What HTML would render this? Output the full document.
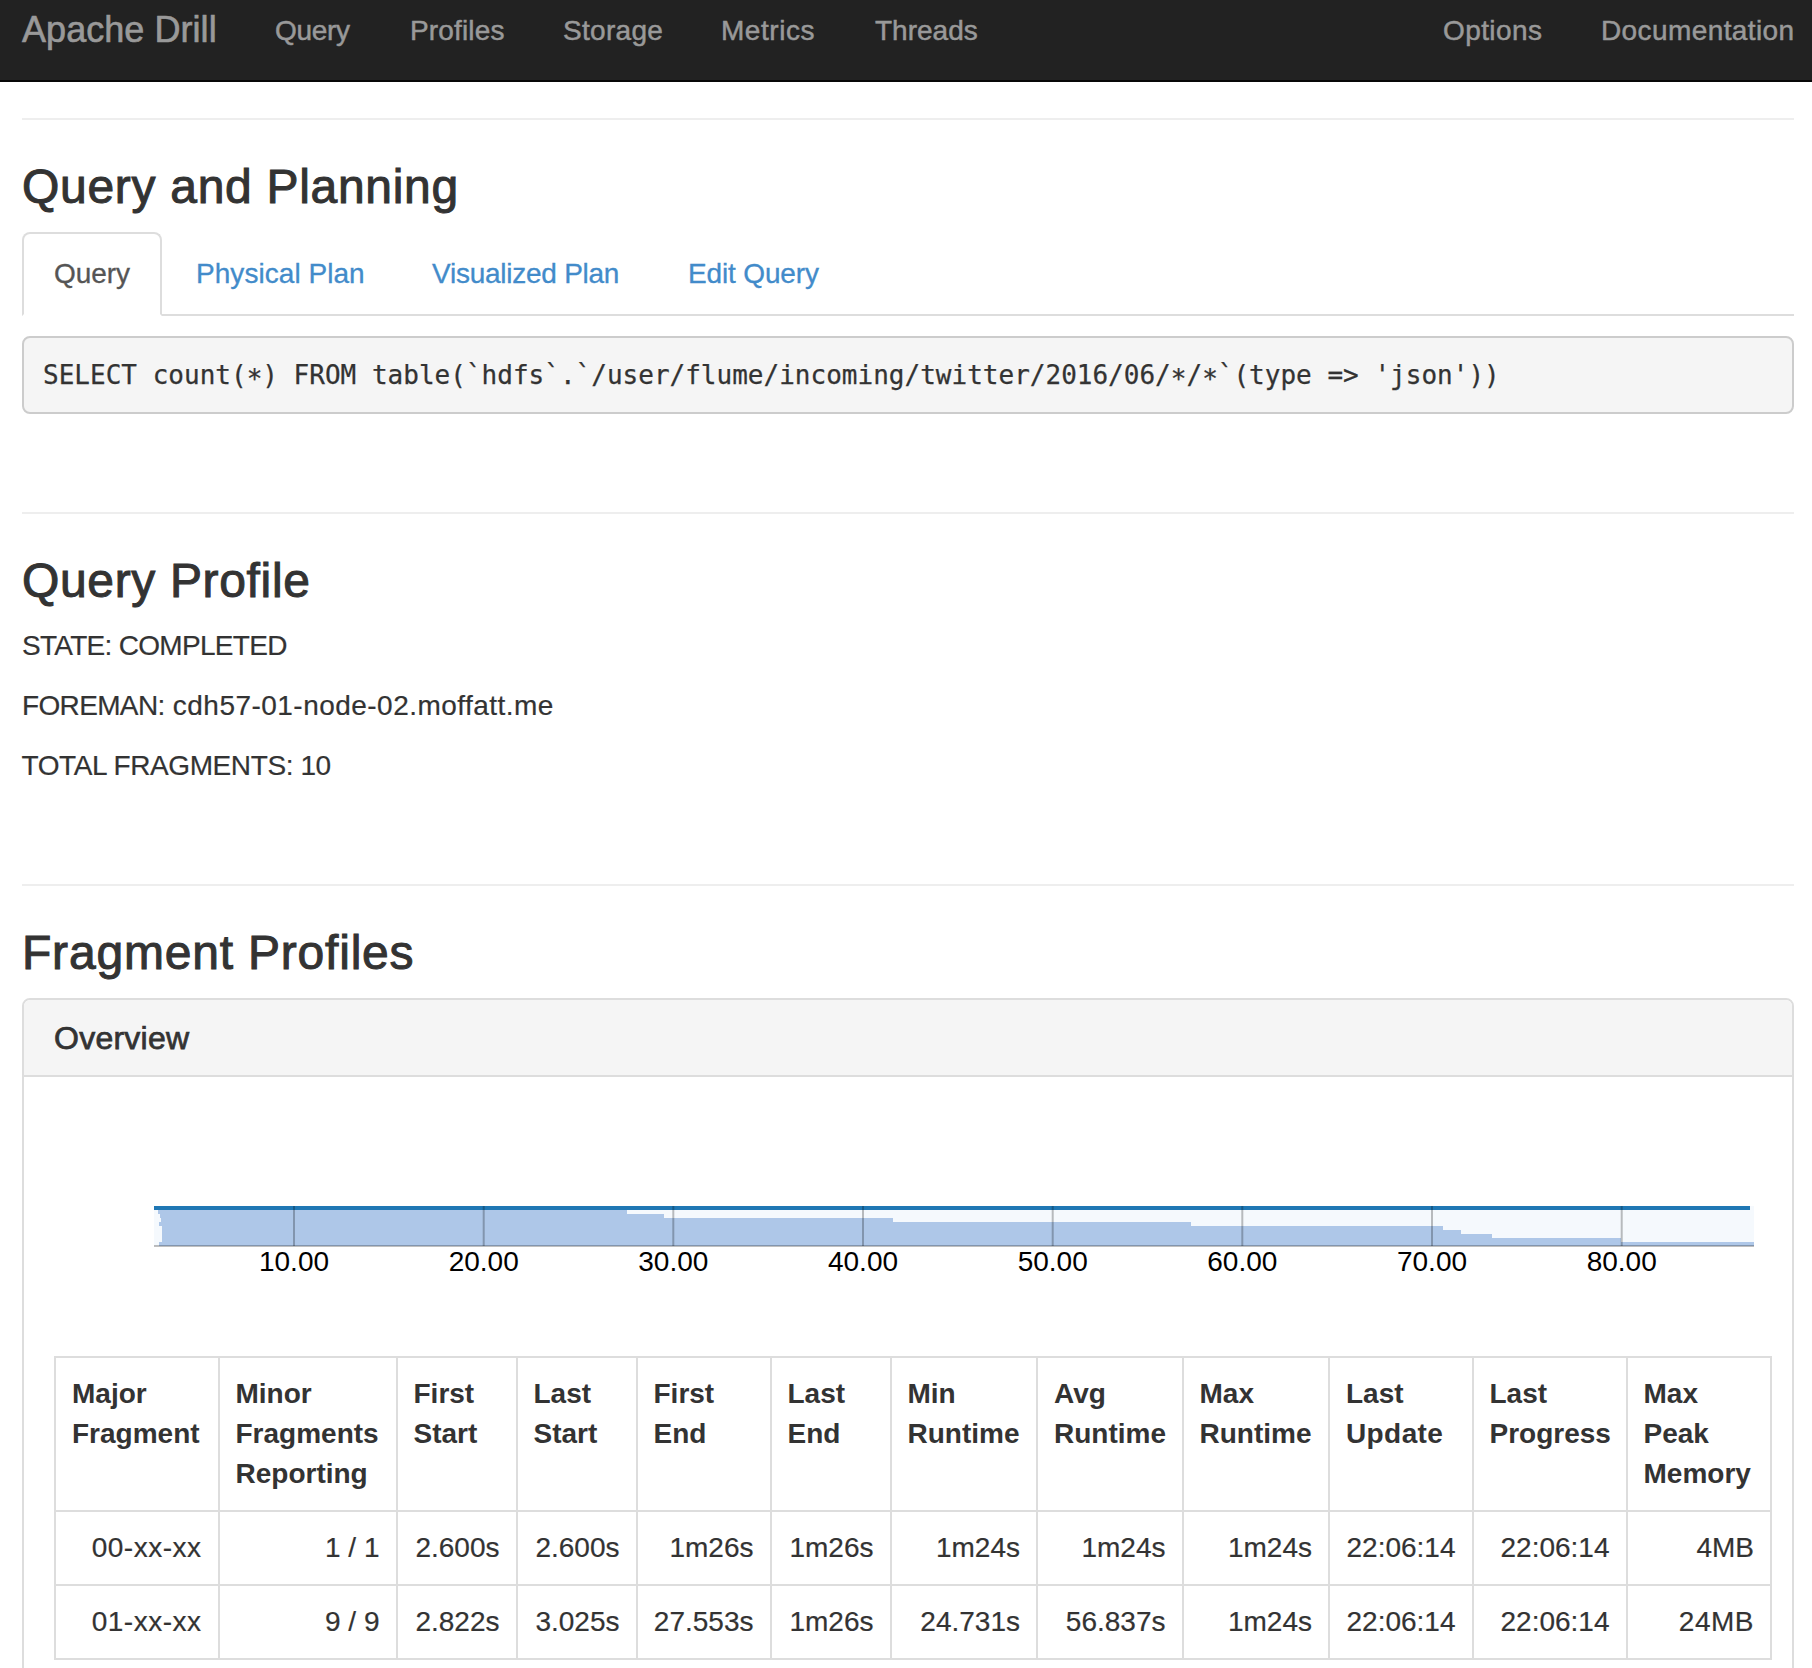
<!DOCTYPE html>
<html lang="en">
<head>
<meta charset="utf-8">
<title>Apache Drill - Query Profile</title>
<style>
*{box-sizing:border-box}
html,body{margin:0;padding:0}
body{width:1812px;height:1668px;overflow:hidden;position:relative;background:#fff;color:#333;
  font-family:"Liberation Sans",Arial,Helvetica,sans-serif;font-size:28px;line-height:40px;-webkit-text-stroke:0.2px #333}
a{color:#428bca;text-decoration:none;-webkit-text-stroke:0.3px #428bca}
/* navbar */
.navbar{position:absolute;left:0;top:-20px;width:1812px;height:102px;background:#222;border-bottom:2px solid #080808}
.navbar a{position:absolute;top:31px;line-height:40px;color:#999;white-space:nowrap;-webkit-text-stroke:0.5px #999}
.navbar a.brand{font-size:36px;top:30px;letter-spacing:0.05px;-webkit-text-stroke:0.65px #999}
/* content */
.wrap{position:absolute;left:22px;top:0;width:1772px}
hr{position:absolute;left:0;width:1772px;margin:0;border:0;border-top:2px solid #eee;height:0}
h3{position:absolute;left:0;margin:0;font-size:48px;line-height:53px;font-weight:500;white-space:nowrap;color:#333;-webkit-text-stroke:1px #333}
.tabs{position:absolute;left:0;top:232px;width:1772px;height:84px;border-bottom:2px solid #ddd}
.tabs a{position:absolute;top:0;height:84px;line-height:84px;padding:0;white-space:nowrap}
.tabs a.active{left:0;width:140px;line-height:80px;color:#555;-webkit-text-stroke:0.3px #555;border:2px solid #ddd;border-bottom-color:#fff;border-radius:8px 8px 0 0;background:#fff;text-align:center}
pre{position:absolute;left:0;top:336px;width:1772px;height:78px;margin:0;padding:0 0 0 19px;letter-spacing:0.01px;border:2px solid #ccc;border-radius:8px;background:#f5f5f5;
  font-family:"DejaVu Sans Mono","Liberation Mono",monospace;font-size:26px;line-height:74px;color:#333;white-space:pre;overflow:hidden;-webkit-text-stroke:0.25px #333}
pre span{position:relative;top:4px}
p{position:absolute;left:0;margin:0;white-space:nowrap;line-height:40px}
.panel{position:absolute;left:0;top:998px;width:1772px;height:700px;border:2px solid #ddd;border-radius:8px 8px 0 0;background:#fff}
.panel-heading{height:77px;background:#f5f5f5;border-bottom:2px solid #ddd;border-radius:6px 6px 0 0;padding:21px 30px 19px}
.panel-title{letter-spacing:0.25px;font-size:32px;line-height:35px;font-weight:500;color:#333;-webkit-text-stroke:0.75px #333}
svg.chart{position:absolute;left:30px;top:110px}
table{position:absolute;left:30px;top:356px;border-collapse:collapse;table-layout:fixed;width:1716px}
th,td{border:2px solid #ddd;padding:16px;line-height:40px;vertical-align:top;white-space:nowrap}
th{text-align:left;font-weight:bold;vertical-align:top;-webkit-text-stroke:0}
td{text-align:right}
</style>
</head>
<body>
<div class="navbar">
  <a class="brand" style="left:22px">Apache Drill</a>
  <a style="left:275px;letter-spacing:-0.3px">Query</a>
  <a style="left:410px;letter-spacing:0.15px">Profiles</a>
  <a style="left:563px;letter-spacing:0.3px">Storage</a>
  <a style="left:721px;letter-spacing:0.55px">Metrics</a>
  <a style="left:875px">Threads</a>
  <a style="left:1443px;letter-spacing:0.4px">Options</a>
  <a style="left:1601px;letter-spacing:0.4px">Documentation</a>
</div>
<div class="wrap">
  <hr style="top:118px">
  <h3 style="top:160px;letter-spacing:0.7px">Query and Planning</h3>
  <div class="tabs">
    <a class="active">Query</a>
    <a style="left:174px;letter-spacing:0.05px">Physical Plan</a>
    <a style="left:410px;letter-spacing:-0.25px">Visualized Plan</a>
    <a style="left:666px;letter-spacing:-0.15px">Edit Query</a>
  </div>
  <pre>SELECT count(<span>*</span>) FROM table(`hdfs`.`/user/flume/incoming/twitter/2016/06/<span>*</span>/<span>*</span>`(type =&gt; 'json'))</pre>
  <hr style="top:512px">
  <h3 style="top:554px;letter-spacing:0.65px">Query Profile</h3>
  <p style="top:626px;letter-spacing:-0.7px">STATE: COMPLETED</p>
  <p style="top:686px;left:0;letter-spacing:0.47px"><span style="letter-spacing:-0.65px">FOREMAN:</span> cdh57-01-node-02.moffatt.me</p>
  <p style="top:746px;left:-0.5px;letter-spacing:-0.4px">TOTAL FRAGMENTS: 10</p>
  <hr style="top:884px">
  <h3 style="top:926px;letter-spacing:0.8px">Fragment Profiles</h3>
  <div class="panel">
    <div class="panel-heading"><div class="panel-title">Overview</div></div>
    <svg class="chart" width="1712" height="240" viewBox="0 0 1712 240" font-family="Liberation Sans, Arial, sans-serif">
      <rect x="100" y="96" width="1600" height="40" fill="#f5f9fd"/>
      <rect x="104" y="100" width="469" height="4" fill="#aec7e8"/>
      <rect x="106" y="104" width="504" height="4" fill="#aec7e8"/>
      <rect x="107" y="108" width="732" height="4" fill="#aec7e8"/>
      <rect x="105" y="112" width="1032" height="4" fill="#aec7e8"/>
      <rect x="108" y="116" width="1281" height="4" fill="#aec7e8"/>
      <rect x="108" y="120" width="1299" height="4" fill="#aec7e8"/>
      <rect x="108" y="124" width="1330" height="4" fill="#aec7e8"/>
      <rect x="108" y="128" width="1459" height="4" fill="#aec7e8"/>
      <rect x="105" y="132" width="1595" height="4" fill="#aec7e8"/>
      <rect x="100" y="96" width="1596" height="4" fill="#1f77b4"/>
      <rect x="239.0" y="96" width="2" height="40" fill="#000" fill-opacity="0.25"/>
      <rect x="428.7" y="96" width="2" height="40" fill="#000" fill-opacity="0.25"/>
      <rect x="618.3" y="96" width="2" height="40" fill="#000" fill-opacity="0.25"/>
      <rect x="808.0" y="96" width="2" height="40" fill="#000" fill-opacity="0.25"/>
      <rect x="997.7" y="96" width="2" height="40" fill="#000" fill-opacity="0.25"/>
      <rect x="1187.3" y="96" width="2" height="40" fill="#000" fill-opacity="0.25"/>
      <rect x="1377.0" y="96" width="2" height="40" fill="#000" fill-opacity="0.25"/>
      <rect x="1566.7" y="96" width="2" height="40" fill="#000" fill-opacity="0.25"/>
      <rect x="100" y="135" width="1600" height="2" fill="#000" fill-opacity="0.25"/>
      <text x="240.0" y="161" text-anchor="middle" font-size="28" fill="#000">10.00</text>
      <text x="429.7" y="161" text-anchor="middle" font-size="28" fill="#000">20.00</text>
      <text x="619.3" y="161" text-anchor="middle" font-size="28" fill="#000">30.00</text>
      <text x="809.0" y="161" text-anchor="middle" font-size="28" fill="#000">40.00</text>
      <text x="998.7" y="161" text-anchor="middle" font-size="28" fill="#000">50.00</text>
      <text x="1188.3" y="161" text-anchor="middle" font-size="28" fill="#000">60.00</text>
      <text x="1378.0" y="161" text-anchor="middle" font-size="28" fill="#000">70.00</text>
      <text x="1567.7" y="161" text-anchor="middle" font-size="28" fill="#000">80.00</text>
    </svg>
    <table>
      <colgroup>
        <col style="width:163.5px"><col style="width:178px"><col style="width:120px"><col style="width:120px">
        <col style="width:134px"><col style="width:120px"><col style="width:146.5px"><col style="width:145.5px">
        <col style="width:146.5px"><col style="width:143.5px"><col style="width:154px"><col style="width:144.5px">
      </colgroup>
      <tr>
        <th>Major<br>Fragment</th><th>Minor<br>Fragments<br>Reporting</th><th>First<br>Start</th><th>Last<br>Start</th>
        <th>First<br>End</th><th>Last<br>End</th><th>Min<br>Runtime</th><th>Avg<br>Runtime</th>
        <th>Max<br>Runtime</th><th>Last<br><span style="letter-spacing:0.4px">Update</span></th><th>Last<br>Progress</th><th>Max<br>Peak<br>Memory</th>
      </tr>
      <tr>
        <td style="letter-spacing:0.5px">00-xx-xx</td><td>1 / 1</td><td>2.600s</td><td>2.600s</td><td>1m26s</td><td>1m26s</td>
        <td>1m24s</td><td>1m24s</td><td>1m24s</td><td>22:06:14</td><td>22:06:14</td><td>4MB</td>
      </tr>
      <tr>
        <td style="letter-spacing:0.5px">01-xx-xx</td><td>9 / 9</td><td>2.822s</td><td>3.025s</td><td>27.553s</td><td>1m26s</td>
        <td>24.731s</td><td>56.837s</td><td>1m24s</td><td>22:06:14</td><td>22:06:14</td><td style="letter-spacing:0.5px">24MB</td>
      </tr>
    </table>
  </div>
</div>
</body>
</html>
